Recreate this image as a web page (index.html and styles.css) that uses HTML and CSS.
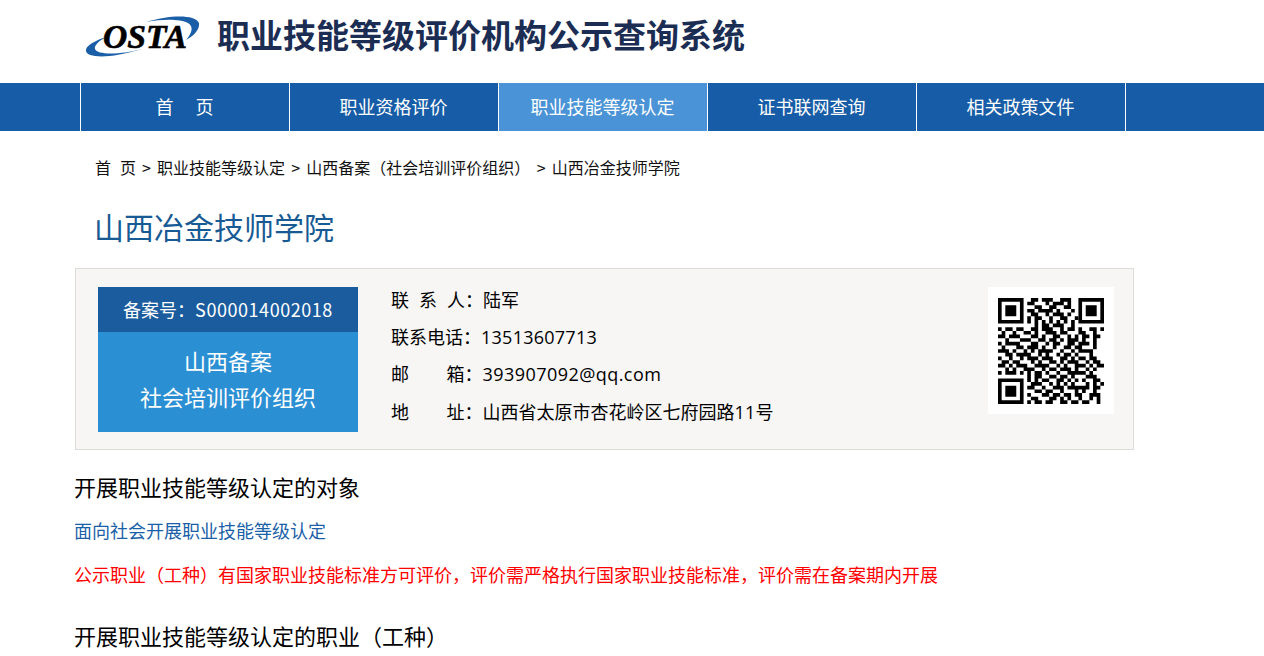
FILE: index.html
```html
<!DOCTYPE html>
<html lang="zh-CN">
<head>
<meta charset="utf-8">
<title>职业技能等级评价机构公示查询系统</title>
<link rel="stylesheet" href="styles.css">
</head>
<body>
<header class="header">
  <svg class="logo" viewBox="0 0 115 44" aria-label="OSTA">
    <path class="swoosh" d="M61 7C84 0 110 -1 114 8C115 14 109 21 101 25C107 18 109 12 103 8C95 4 78 4 61 7Z"/>
    <path class="swoosh" d="M23 21C9 26 0 31 1 36C2 43 25 44 57 34C35 40 12 40 10 34C9 30 15 25 23 21Z"/>
    <text class="logo-text" x="18" y="33" textLength="84" lengthAdjust="spacingAndGlyphs">OSTA</text>
  </svg>
  <h1 class="site-title">职业技能等级评价机构公示查询系统</h1>
</header>
<nav class="nav">
  <a class="nav-item"><span class="nav-home">首</span>页</a>
  <a class="nav-item">职业资格评价</a>
  <a class="nav-item active">职业技能等级认定</a>
  <a class="nav-item">证书联网查询</a>
  <a class="nav-item">相关政策文件</a>
</nav>
<main class="main">
  <div class="crumbs"><span class="crumb-home">首</span>页 <i>&gt;</i> 职业技能等级认定 <i>&gt;</i> 山西备案（社会培训评价组织） <i class="far">&gt;</i> 山西冶金技师学院</div>
  <h2 class="org-name">山西冶金技师学院</h2>
  <section class="card">
    <div class="badge">
      <div class="badge-no">备案号：<span class="badge-num">S000014002018</span></div>
      <div class="badge-type">山西备案<br>社会培训评价组织</div>
    </div>
    <div class="contact">
      <p><span class="sp-three">联系</span>人：陆军</p>
      <p>联系电话：<span class="num">13513607713</span></p>
      <p><span class="sp-two">邮</span>箱：<span class="num email">393907092@qq.com</span></p>
      <p><span class="sp-two">地</span>址：山西省太原市杏花岭区七府园路<span class="num">11</span>号</p>
    </div>
    <div class="qr">
      <svg class="qr-code" viewBox="0 0 29 29" aria-label="QR">
        <path class="finder" fill-rule="evenodd" d="M0 0h7v7H0zM1 1v5h5V1zM2 2h3v3H2zM22 0h7v7h-7zM23 1v5h5V1zM24 2h3v3h-3zM0 22h7v7H0zM1 23v5h5v-5zM2 24h3v3H2z"/>
        <path class="modules" d="M9 .5h2m1 0h3m2 0h3M8 1.5h2m3 0h1m1 0h3m1 0h1M10 2.5h2m2 0h2m2 0h2M8 3.5h2m1 0h4m1 0h1m3 0h1M9 4.5h2m2 0h1m1 0h3m1 0h1M8 5.5h1m1 0h2m2 0h1m2 0h2m2 0h1M8 6.5h1m1 0h1m1 0h1m1 0h1m1 0h1m1 0h1m1 0h1M10 7.5h1m1 0h2m1 0h3m2 0h1M0 8.5h1m1 0h2m1 0h2m2 0h2m1 0h3m2 0h1m1 0h2m1 0h1m2 0h2m1 0h1M1 9.5h1m2 0h1m2 0h2m1 0h1m2 0h3m1 0h2m3 0h2m2 0h1M0 10.5h2m1 0h3m3 0h2m1 0h1m2 0h2m2 0h1m1 0h1m1 0h2m1 0h2M2 11.5h1m3 0h3m2 0h2m1 0h2m1 0h1m1 0h3m1 0h1m2 0h1M0 12.5h1m1 0h4m3 0h2m2 0h1m1 0h2m2 0h2m1 0h3m1 0h1M1 13.5h1m3 0h2m1 0h3m1 0h1m2 0h1m2 0h2m1 0h2m3 0h1M0 14.5h3m1 0h1m2 0h1m1 0h1m1 0h4m2 0h1m2 0h1m1 0h4M2 15.5h2m1 0h4m2 0h1m1 0h1m2 0h1m1 0h2m1 0h1m3 0h1M0 16.5h1m2 0h1m2 0h1m1 0h3m1 0h3m2 0h2m1 0h1m1 0h2m1 0h2M1 17.5h2m1 0h2m3 0h1m1 0h1m2 0h2m1 0h1m1 0h3m2 0h1m1 0h2M0 18.5h2m1 0h1m1 0h3m2 0h4m2 0h1m1 0h1m2 0h3m1 0h1m1 0h2M2 19.5h1m1 0h1m2 0h3m2 0h1m1 0h2m1 0h3m1 0h1m2 0h1m1 0h1M0 20.5h1m1 0h3m1 0h1m1 0h1m1 0h2m1 0h1m2 0h1m2 0h5m1 0h1M8 21.5h1m1 0h2m2 0h2m1 0h2m1 0h1m3 0h3M8 22.5h1m1 0h1m1 0h2m2 0h2m1 0h1m1 0h1m1 0h1m2 0h2M9 23.5h3m2 0h1m1 0h1m1 0h1m1 0h1m3 0h1m1 0h1m1 0h1M8 24.5h2m2 0h1m2 0h3m1 0h6m1 0h2M10 25.5h2m1 0h2m2 0h1m3 0h1m1 0h1m2 0h1M8 26.5h1m3 0h2m1 0h2m1 0h2m1 0h2m2 0h3M9 27.5h2m3 0h2m1 0h1m1 0h1m2 0h1m2 0h1m1 0h1M8 28.5h1m1 0h2m1 0h2m2 0h2m1 0h2m1 0h2m2 0h1m1 0h1"/>
      </svg>
    </div>
  </section>
  <h3 class="section-title first">开展职业技能等级认定的对象</h3>
  <p class="note-blue">面向社会开展职业技能等级认定</p>
  <p class="note-red">公示职业（工种）有国家职业技能标准方可评价，评价需严格执行国家职业技能标准，评价需在备案期内开展</p>
  <h3 class="section-title second">开展职业技能等级认定的职业（工种）</h3>
</main>
</body>
</html>
```
FILE: styles.css
```css
* { box-sizing: border-box; }
html, body { margin: 0; padding: 0; }
body {
  background: #fff;
  color: #000;
  font-family: "Noto Sans CJK SC", "Noto Sans", sans-serif;
  font-size: 18px;
}
.header {
  display: flex;
  align-items: center;
  height: 83px;
  padding-left: 85px;
  padding-bottom: 16px;
}
.logo { width: 115px; height: 44px; flex: none; margin: 7px 17px 0 0; overflow: visible; }
.swoosh { fill: #1b5ea8; }
.logo-text {
  font-family: "Liberation Serif", serif;
  font-weight: 700;
  font-style: italic;
  font-size: 33px;
  fill: #000;
  stroke: #000;
  stroke-width: .6;
}
.site-title {
  margin: 0;
  font-size: 33px;
  line-height: 44px;
  font-weight: 700;
  color: #1c2d54;
}
.nav {
  display: flex;
  height: 48px;
  padding-left: 80px;
  background: #175ca6;
}
.nav-item {
  width: 209px;
  padding-right: 1px;
  border-left: 1px solid #fff;
  color: #fff;
  font-size: 18px;
  line-height: 47px;
  text-align: center;
}
.nav-item:last-child { width: 210px; border-right: 1px solid #fff; }
.nav-item.active { background: #4a93d6; }
.nav-home { margin-right: 22px; }
.main { padding-left: 75px; width: 1134px; }
.crumbs {
  padding: 25px 0 0 20px;
  font-size: 16px;
  line-height: 22px;
  color: #111;
}
.crumbs i { font-style: normal; margin: 0 2.5px; }
.crumbs i.far { margin-left: 3px; }
.crumb-home { margin-right: 9px; }
.org-name {
  margin: 0;
  padding: 25px 0 0 19px;
  font-size: 30px;
  line-height: 46px;
  font-weight: 400;
  color: #175a94;
}
.card {
  display: flex;
  align-items: flex-start;
  margin-top: 19px;
  padding: 18px 19px 17px 22px;
  background: #f7f6f4;
  border: 1px solid #dcdcd8;
}
.badge { width: 260px; flex: none; color: #fff; text-align: center; }
.badge-no { height: 45px; line-height: 44px; background: #1a5c9e; }
.badge-num { letter-spacing: .55px; }
.badge-type {
  height: 100px;
  padding-top: 10px;
  font-size: 22px;
  line-height: 36px;
  background: #2b8fd3;
}
.contact { flex: 1; margin-left: 33px; margin-top: -6px; }
.contact p { margin: 0; line-height: 36.5px; }
.sp-three { letter-spacing: 10px; }
.sp-two { letter-spacing: 37.5px; }
.num { font-family: "Open Sans", "Noto Sans CJK SC", sans-serif; letter-spacing: .25px; }
.num.email { letter-spacing: .45px; }
.qr {
  width: 126px;
  height: 127px;
  padding: 11px 10px;
  flex: none;
  background: #fff;
}
.qr-code { display: block; width: 106px; height: 106px; }
.finder { fill: #000; }
.modules { fill: none; stroke: #000; stroke-width: 1; }
.section-title { margin: 0 0 0 -1px; font-size: 22px; line-height: 30px; font-weight: 400; }
.section-title.first { padding-top: 21px; }
.section-title.second { padding-top: 32px; }
.note-blue { margin: 0 0 0 -1px; padding-top: 15px; line-height: 28px; color: #1a5fa8; }
.note-red { margin: 0 0 0 -1px; padding-top: 16px; line-height: 28px; color: #f00; }
```
